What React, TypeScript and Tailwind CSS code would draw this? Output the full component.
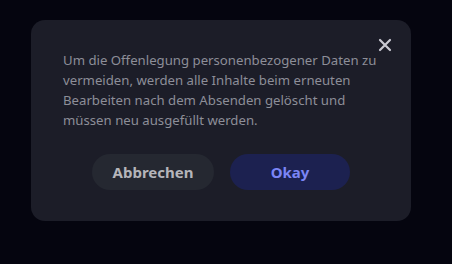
export default function App() {
  return (
    <div className="flex h-[264px] w-[452px] items-start bg-[#05050f] pl-[31px] pt-[20px] font-['Noto_Sans',sans-serif]">
      <div className="relative w-[380px] rounded-[14px] bg-[#1c1d28] px-[32px] pb-[31px] pt-[30px]">
        <button className="absolute right-[19px] top-[18px] text-[#c9c9d2]" aria-label="Schließen">
          <svg width="14" height="14" viewBox="0 0 14 14" fill="none" stroke="currentColor" strokeWidth="2.2" strokeLinecap="round">
            <path d="M2 2L12 12M12 2L2 12" />
          </svg>
        </button>
        <p className="text-[13.2px] leading-[20px] text-[#8d8e98]">
          Um die Offenlegung personenbezogener Daten zu vermeiden, werden alle Inhalte beim erneuten Bearbeiten nach dem Absenden gelöscht und müssen neu ausgefüllt werden.
        </p>
        <div className="mt-[24px] flex justify-center gap-[16px]">
          <button className="h-[36px] w-[122px] rounded-full bg-[#252831] text-[15px] font-bold text-[#b5b5ba]">
            Abbrechen
          </button>
          <button className="h-[36px] w-[120px] rounded-full bg-[#1c2150] text-[15px] font-bold text-[#7b85f6]">
            Okay
          </button>
        </div>
      </div>
    </div>
  );
}
